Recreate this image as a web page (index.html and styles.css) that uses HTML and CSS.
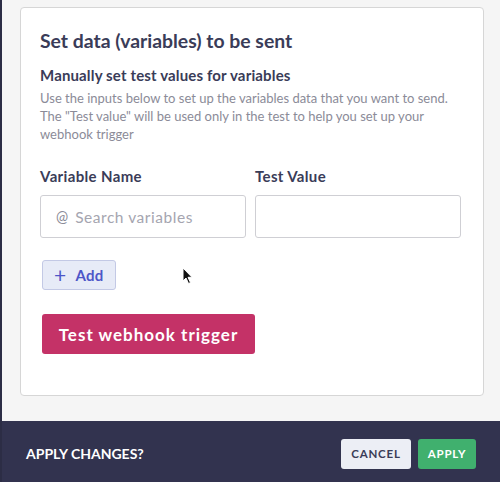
FILE: index.html
```html
<!DOCTYPE html>
<html>
<head>
<meta charset="utf-8">
<link rel="stylesheet" href="styles.css">
</head>
<body>
<div class="page">
  <main class="content">
    <section class="card">
      <h1 class="title">Set data (variables) to be sent</h1>
      <h2 class="subtitle">Manually set test values for variables</h2>
      <p class="desc">Use the inputs below to set up the variables data that you want to send. The "Test value" will be used only in the test to help you set up your webhook trigger</p>
      <div class="grid">
        <div class="col">
          <div class="label">Variable Name</div>
          <div class="input input-left"><span class="at">@</span><span class="ph">Search variables</span></div>
        </div>
        <div class="col">
          <div class="label">Test Value</div>
          <div class="input input-right"></div>
        </div>
      </div>
      <div class="add-row">
        <button class="add"><span class="plus">+</span>Add</button>
        <svg class="cursor" width="12" height="18" viewBox="0 0 12 18"><path d="M1 1 L1 14 L4 11 L6.5 16.5 L8.5 15.6 L6 10.3 L10 10.3 Z" fill="#111" stroke="#fff" stroke-width="1"/></svg>
      </div>
      <button class="test">Test webhook trigger</button>
    </section>
  </main>
  <footer class="bar">
    <span class="question">APPLY CHANGES?</span>
    <div class="actions">
      <button class="cancel">CANCEL</button>
      <button class="apply">APPLY</button>
    </div>
  </footer>
</div>
</body>
</html>
```
FILE: styles.css
```css
* { box-sizing: border-box; }
html, body { margin: 0; padding: 0; }
body {
  width: 500px;
  height: 482px;
  overflow: hidden;
  font-family: Lato, "Open Sans", sans-serif;
  background: #f5f5f5;
}
.page {
  height: 482px;
  display: flex;
  flex-direction: column;
  border-left: 2px solid #2c2d45;
}
.content {
  flex: 1;
  padding: 7px 16px 0 18px;
}
.card {
  background: #fff;
  border: 1px solid #d6d6d6;
  border-radius: 4px;
  height: 389px;
  padding: 21px 20px 0 19px;
}
.title {
  margin: 0;
  font-size: 19.4px;
  font-weight: 700;
  color: #3a3c58;
  line-height: 24px;
}
.subtitle {
  margin: 12px 0 0;
  font-size: 15px;
  font-weight: 700;
  color: #3a3c58;
  line-height: 20px;
  letter-spacing: 0.15px;
}
.desc {
  margin: 4px 0 0;
  font-size: 13px;
  line-height: 18px;
  color: #8b8b98;
}
.grid {
  display: grid;
  grid-template-columns: 206px 206px;
  column-gap: 9px;
  margin-top: 23px;
}
.label {
  font-size: 15px;
  font-weight: 700;
  color: #3a3c58;
  line-height: 20px;
  margin-bottom: 9px;
  letter-spacing: 0.35px;
}
.input {
  height: 43px;
  border: 1px solid #cfcfd4;
  border-radius: 3px;
  background: #fff;
  display: flex;
  align-items: center;
  padding-left: 15px;
}
.input-right { margin-top: 2px; }
.at {
  color: #8b8b98;
  font-size: 14.5px;
  margin-right: 7px;
}
.ph {
  color: #a5a5b0;
  font-size: 15.5px;
  letter-spacing: 0.55px;
}
.add-row {
  position: relative;
  margin-top: 22px;
  height: 30px;
}
.add {
  margin-left: 2px;
  height: 30px;
  width: 74px;
  background: #e7ebf7;
  border: 1px solid #c3c9e5;
  border-radius: 3px;
  color: #4d56c8;
  font-family: inherit;
  font-size: 15px;
  font-weight: 700;
  letter-spacing: 0.3px;
  display: flex;
  align-items: center;
  padding: 0 0 0 11px;
}
.plus {
  font-size: 21px;
  font-weight: 400;
  margin-right: 9px;
  line-height: 1;
  position: relative;
  top: -1px;
}
.cursor {
  position: absolute;
  left: 142px;
  top: 7px;
}
.test {
  margin-top: 24px;
  margin-left: 2px;
  width: 213px;
  height: 40px;
  background: #c43267;
  border: none;
  border-radius: 3px;
  color: #fff;
  font-family: inherit;
  font-size: 17px;
  font-weight: 700;
  letter-spacing: 1px;
}
.bar {
  height: 61px;
  background: #32334f;
  display: flex;
  align-items: center;
  justify-content: space-between;
  padding: 4px 24px 0 24px;
}
.question {
  color: #fff;
  font-size: 14px;
  font-weight: 700;
  letter-spacing: 0px;
}
.actions {
  display: flex;
  gap: 7px;
}
.actions button {
  height: 30px;
  border: none;
  border-radius: 3px;
  font-family: inherit;
  font-size: 11.5px;
  font-weight: 700;
  letter-spacing: 0.8px;
}
.cancel {
  width: 70px;
  background: #eceef5;
  color: #3a3c58;
}
.apply {
  width: 58px;
  background: #40b06e;
  color: #fff;
}
```
